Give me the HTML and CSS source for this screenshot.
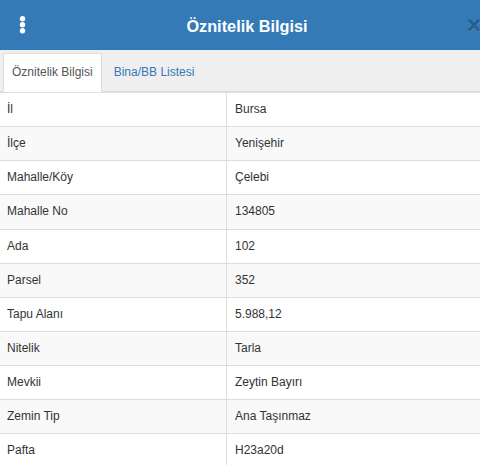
FILE: index.html
```html
<!DOCTYPE html>
<html lang="tr">
<head>
<meta charset="utf-8">
<title>Öznitelik Bilgisi</title>
<link rel="stylesheet" href="styles.css">
</head>
<body>
<div class="panel">
  <header class="panel-header">
    <button class="menu-btn" type="button" aria-label="Menü">
      <svg width="7" height="18" viewBox="0 0 7 18" aria-hidden="true">
        <circle cx="3.5" cy="2.8" r="2.7" fill="#fff"/>
        <circle cx="3.5" cy="8.8" r="2.7" fill="#fff"/>
        <circle cx="3.5" cy="14.8" r="2.7" fill="#fff"/>
      </svg>
    </button>
    <h1 class="panel-title">Öznitelik Bilgisi</h1>
    <div class="close-wrap"><button class="close" type="button" aria-label="Kapat">×</button></div>
  </header>
  <nav class="tabs">
    <a class="tab active" href="#">Öznitelik Bilgisi</a>
    <a class="tab" href="#">Bina/BB Listesi</a>
  </nav>
  <div class="attr-table">
    <div class="row"><div class="cell key">İl</div><div class="cell val">Bursa</div></div>
    <div class="row"><div class="cell key">İlçe</div><div class="cell val">Yenişehir</div></div>
    <div class="row"><div class="cell key">Mahalle/Köy</div><div class="cell val">Çelebi</div></div>
    <div class="row"><div class="cell key">Mahalle No</div><div class="cell val">134805</div></div>
    <div class="row"><div class="cell key">Ada</div><div class="cell val">102</div></div>
    <div class="row"><div class="cell key">Parsel</div><div class="cell val">352</div></div>
    <div class="row"><div class="cell key">Tapu Alanı</div><div class="cell val">5.988,12</div></div>
    <div class="row"><div class="cell key">Nitelik</div><div class="cell val">Tarla</div></div>
    <div class="row"><div class="cell key">Mevkii</div><div class="cell val">Zeytin Bayırı</div></div>
    <div class="row"><div class="cell key">Zemin Tip</div><div class="cell val">Ana Taşınmaz</div></div>
    <div class="row"><div class="cell key">Pafta</div><div class="cell val">H23a20d</div></div>
  </div>
</div>
</body>
</html>
```

FILE: styles.css
```css
html, body {
  margin: 0;
  padding: 0;
  overflow: hidden;
  background: #fff;
}
body {
  font-family: "Liberation Sans", Arial, Helvetica, sans-serif;
  font-size: 12px;
  line-height: 1.42857;
  color: #333;
}
.panel {
  width: 494px;
}
.panel-header {
  height: 50px;
  background: #337ab7;
  display: grid;
  grid-template-columns: 1fr auto 1fr;
  align-items: center;
}
.menu-btn {
  justify-self: start;
  margin-left: 19px;
  padding: 0;
  border: 0;
  background: none;
  display: flex;
}
.panel-title {
  margin: 0;
  font-size: 16.3px;
  font-weight: bold;
  color: #fff;
  line-height: 20px;
  padding-top: 1px;
}
.close-wrap {
  justify-self: end;
  padding-right: 13px;
  display: flex;
}
.close {
  border: 0;
  background: none;
  padding: 0;
  font-family: "Liberation Sans", Arial, sans-serif;
  font-size: 25px;
  font-weight: bold;
  line-height: 1;
  color: #000;
  text-shadow: 0 1px 0 rgba(255, 255, 255, 0.6);
  opacity: 0.22;
}
.tabs {
  display: flex;
  background: #efefef;
  padding: 3px 3px 0;
  border-bottom: 1px solid #ddd;
}
.tab {
  display: block;
  padding: 10px 8px;
  margin-bottom: -1px;
  margin-right: 3px;
  border: 1px solid transparent;
  border-radius: 2px 2px 0 0;
  color: #337ab7;
  text-decoration: none;
  line-height: 17px;
}
.tab.active {
  background: #fff;
  color: #555;
  border-color: #ddd;
  border-bottom-color: transparent;
}
.row {
  display: grid;
  grid-template-columns: 226px 1fr;
  border-top: 1px solid #ddd;
}
.row:nth-child(even) {
  background: #f9f9f9;
}
.cell {
  padding: 8px;
  line-height: 1.42857;
}
.key {
  padding-left: 7px;
}
.val {
  border-left: 1px solid #ddd;
}
```
